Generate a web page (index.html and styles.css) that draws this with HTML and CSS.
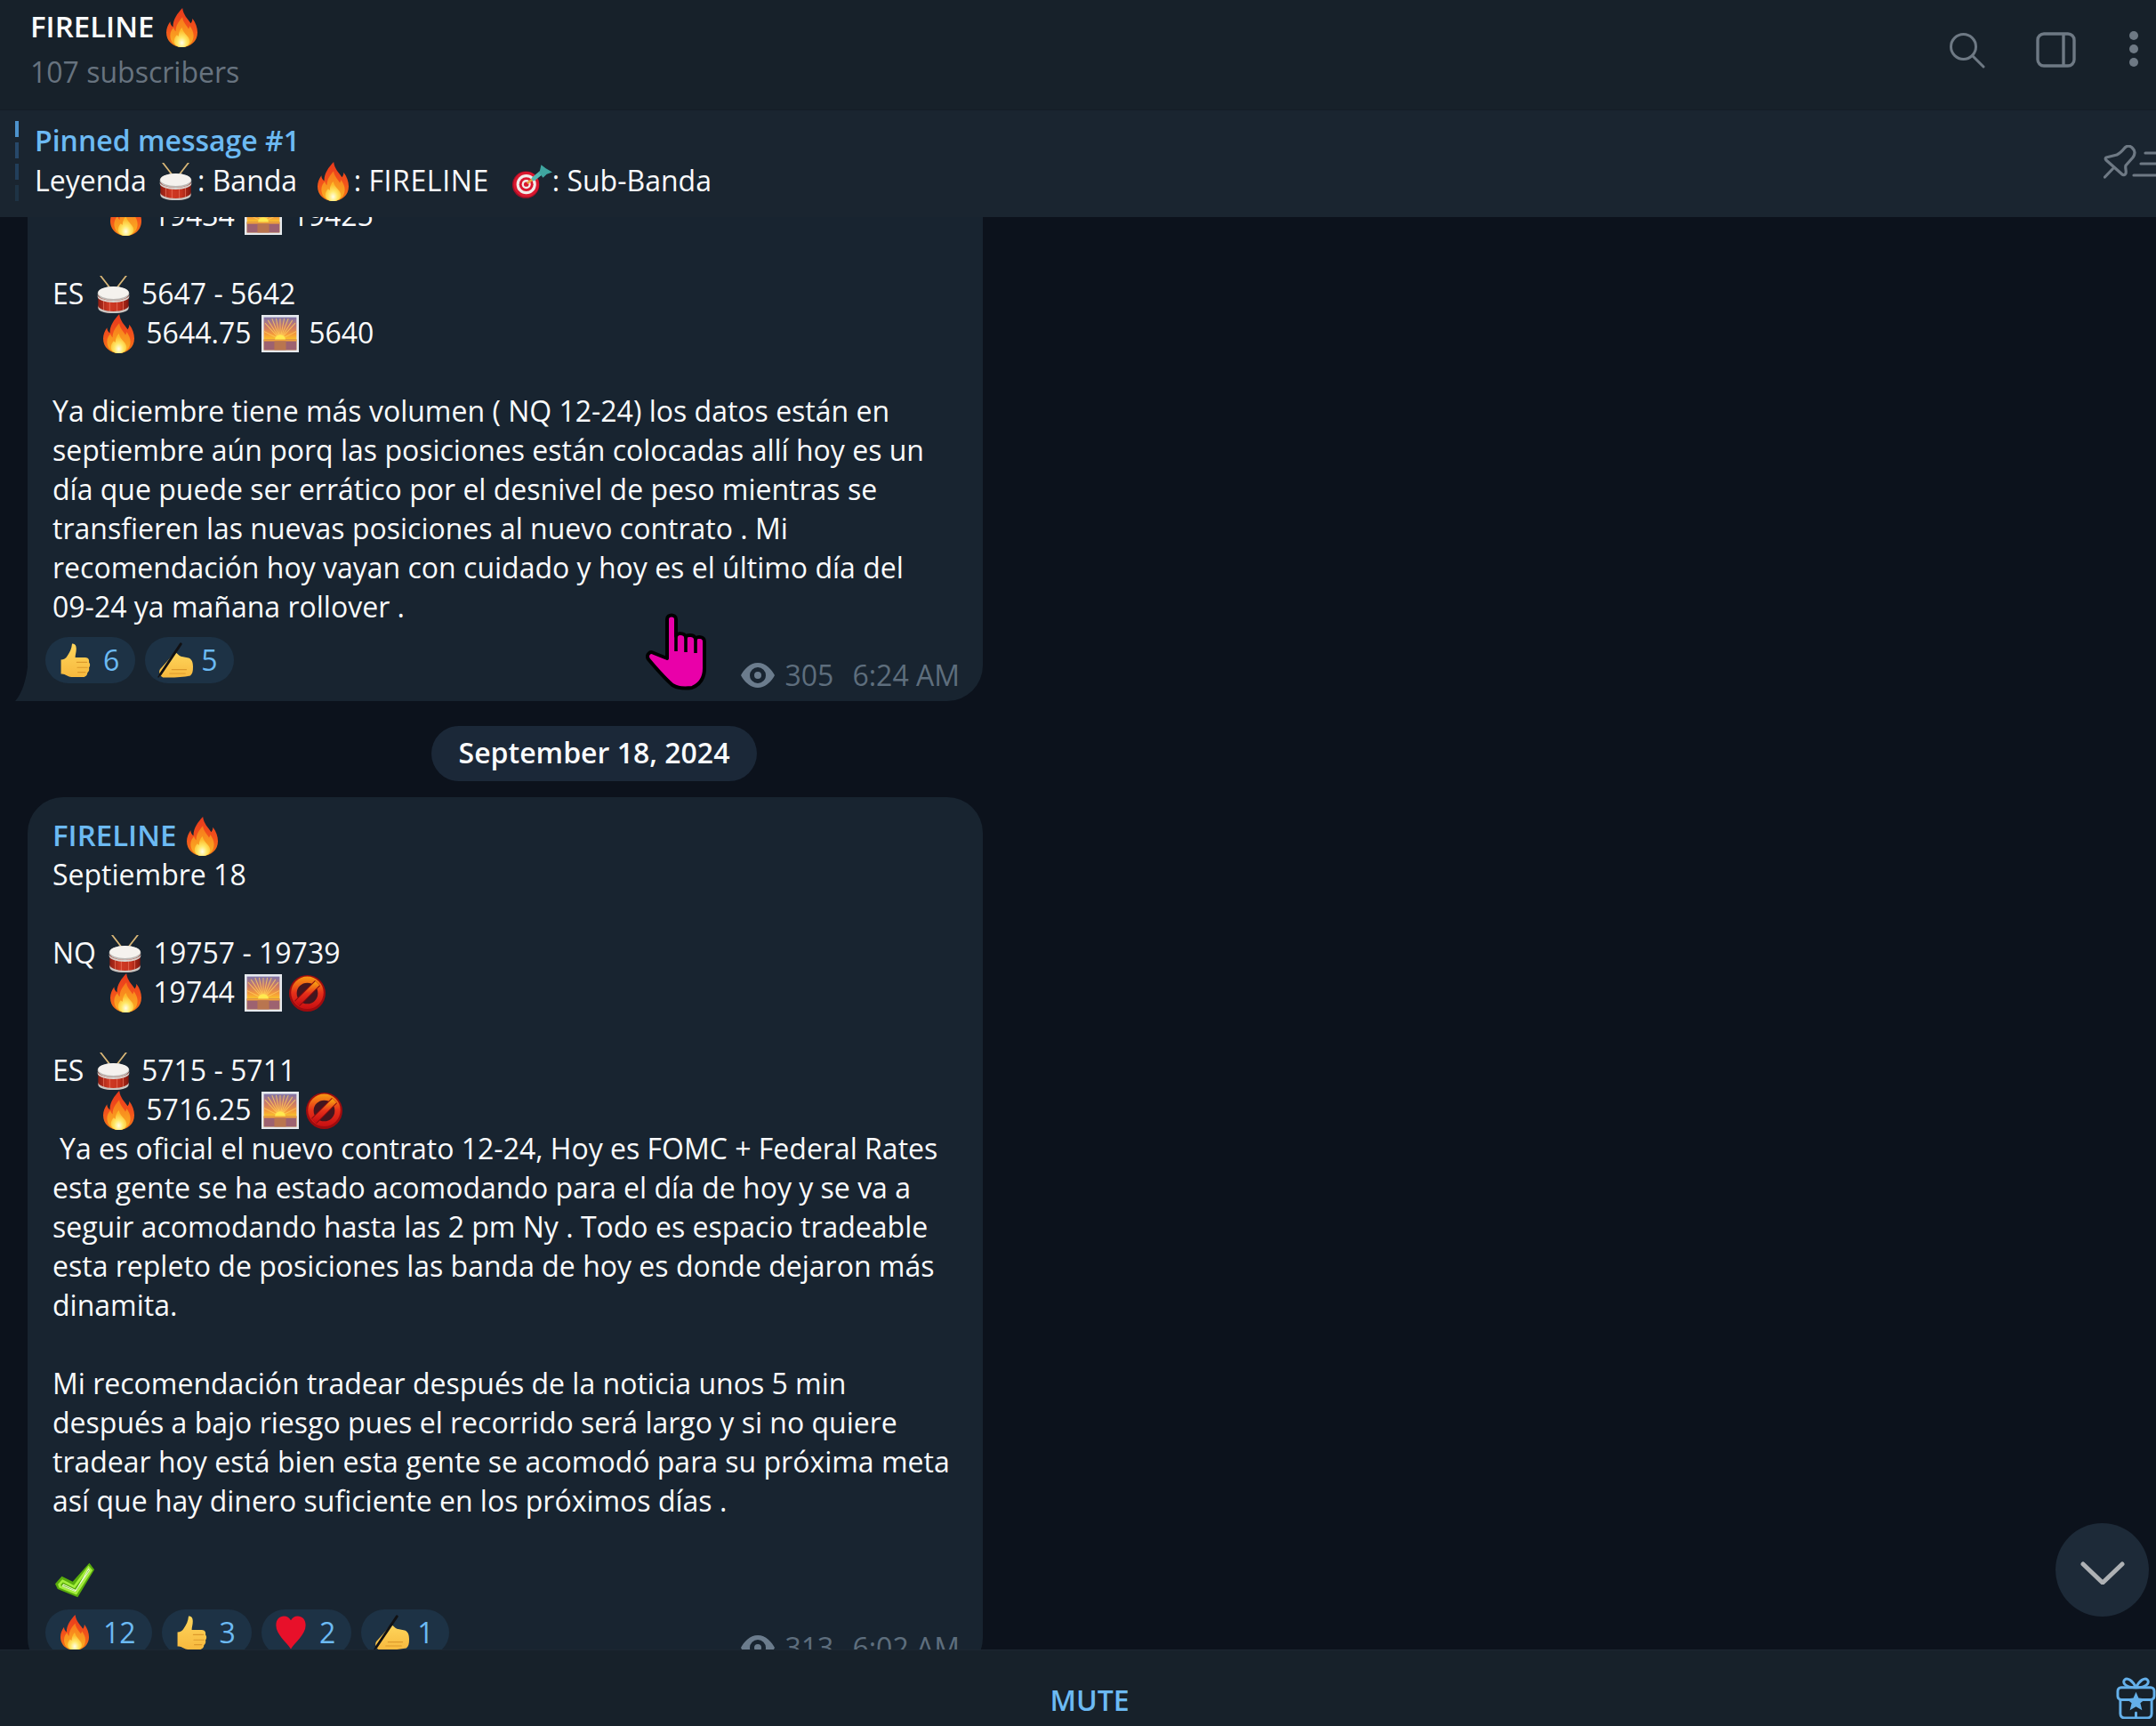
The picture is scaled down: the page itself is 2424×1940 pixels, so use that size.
FILE: index.html
```html
<!DOCTYPE html>
<html lang="es">
<head>
<meta charset="utf-8">
<title>FIRELINE</title>
<link rel="stylesheet" href="styles.css">
</head>
<body>
<svg class="sprite" xmlns="http://www.w3.org/2000/svg" aria-hidden="true">
  <defs>
    <linearGradient id="gFire" x1="0" y1="0" x2="0" y2="1"><stop offset="0" stop-color="#e8391c"/><stop offset=".55" stop-color="#f2531b"/><stop offset="1" stop-color="#f47a16"/></linearGradient>
    <linearGradient id="gFireMid" x1="0" y1="0" x2="0" y2="1"><stop offset="0" stop-color="#f7761a"/><stop offset="1" stop-color="#fbb324"/></linearGradient>
    <radialGradient id="gFireIn" cx=".5" cy=".78" r=".62"><stop offset="0" stop-color="#fffde8"/><stop offset=".45" stop-color="#ffe96a"/><stop offset="1" stop-color="#fdb92a"/></radialGradient>
    <linearGradient id="gDrum" x1="0" y1="0" x2="1" y2="0"><stop offset="0" stop-color="#8f1d12"/><stop offset=".35" stop-color="#d03a24"/><stop offset=".7" stop-color="#c5321e"/><stop offset="1" stop-color="#7f170f"/></linearGradient>
    <linearGradient id="gSky" x1="0" y1="0" x2="0" y2="1"><stop offset="0" stop-color="#7f74a8"/><stop offset=".28" stop-color="#c8776a"/><stop offset=".52" stop-color="#f59a3a"/><stop offset=".66" stop-color="#f9bf2e"/></linearGradient>
    <linearGradient id="gNo" x1="0" y1="0" x2="0" y2="1"><stop offset="0" stop-color="#f79a12"/><stop offset=".5" stop-color="#e6301a"/><stop offset="1" stop-color="#c90f12"/></linearGradient>
    <linearGradient id="gThumb" x1="0" y1="0" x2="0" y2="1"><stop offset="0" stop-color="#ffd65c"/><stop offset="1" stop-color="#f7b93e"/></linearGradient>

    <symbol id="fire" viewBox="4 0 56 64" preserveAspectRatio="none">
      <path fill="url(#gFire)" d="M33 0c2 12 9 17 15 25 2-2 3-5 3-8 6 7 9 15 9 23 0 14-12 24-28 24S4 54 4 40c0-7 3-13 7-18 0 4 2 7 5 9 0-13 8-22 17-31z"/>
      <path fill="url(#gFireMid)" d="M33 15c1 8 6 12 11 19 1-1 2-3 2-5 4 5 7 10 7 16 0 11-9 19-21 19S11 56 11 45c0-6 3-10 6-13 1 3 2 5 4 6 0-9 5-16 12-23z"/>
      <path fill="url(#gFireIn)" d="M32 32c2 6 5 9 9 13 3 3 5 6 5 9 0 6-6 10-14 10s-14-4-14-10c0-4 2-7 5-10 1 1 2 2 3 2 0-5 2-10 6-14z"/>
    </symbol>

    <symbol id="drum" viewBox="5 0 54 63" preserveAspectRatio="none">
      <path d="M11 0l19 25M53 0L34 25" stroke="#d9b777" stroke-width="2.6" stroke-linecap="round" fill="none"/>
      <path fill="url(#gDrum)" d="M7 31v22c0 6 11 10 25 10s25-4 25-10V31z"/>
      <path d="M16 38v23M26 41v22M38 41v22M48 38v23" stroke="#e9745e" stroke-width="1.1" fill="none"/>
      <path d="M7 50c0 6 11 10 25 10s25-4 25-10v4c0 6-11 9-25 9S7 60 7 54z" fill="#c9c6c2"/>
      <ellipse cx="32" cy="30" rx="26" ry="12" fill="#bdb9b5"/>
      <ellipse cx="32" cy="28.5" rx="25" ry="10.5" fill="#f5f2ee"/>
      <path d="M6 32c0 6 12 10 26 10s26-4 26-10v3c0 6-12 10-26 10S6 41 6 35z" fill="#d8d4cf"/>
    </symbol>

    <symbol id="sunrise" viewBox="0 0 64 64">
      <rect x="0" y="0" width="64" height="64" fill="#e6eaee"/>
      <rect x="4" y="4" width="56" height="56" fill="url(#gSky)"/>
      <g stroke="#ffcf5e" stroke-width="1.6" opacity=".75">
        <path d="M32 42L32 6M32 42L18 6M32 42L46 6M32 42L6 14M32 42L58 14M32 42L4 28M32 42L60 28M32 42L25 6M32 42L39 6M32 42L11 9M32 42L53 9"/>
      </g>
      <path d="M4 42h56v18H4z" fill="#9d6270"/>
      <path d="M4 42h56v3H4z" fill="#f4a436"/>
      <path d="M22 45h20v15H22z" fill="#b9754f"/>
      <path d="M23 42a9 8 0 0 1 18 0z" fill="#ffe94f"/>
    </symbol>

    <symbol id="noentry" viewBox="0 0 64 64">
      <circle cx="32" cy="32" r="32" fill="#9f0b0e"/>
      <circle cx="32" cy="31" r="28.5" fill="url(#gNo)"/>
      <circle cx="32" cy="32" r="18.5" fill="#43161f"/>
      <path d="M14 50L50 14" stroke="#8a0a0e" stroke-width="13"/>
      <path d="M14 50L50 14" stroke="url(#gNo)" stroke-width="10"/>
    </symbol>

    <symbol id="target" viewBox="0 0 43 36">
      <circle cx="14.5" cy="21.5" r="14.5" fill="#a40f26"/>
      <circle cx="15" cy="21" r="13.6" fill="#d9182f"/>
      <circle cx="15" cy="21" r="10.6" fill="#f2ecea"/>
      <circle cx="15" cy="21" r="7.6" fill="#d9182f"/>
      <circle cx="15" cy="21" r="4.8" fill="#f2ecea"/>
      <circle cx="15" cy="21" r="2.6" fill="#d9182f"/>
      <path d="M16 20l8-6" stroke="#e9a13a" stroke-width="2.4"/>
      <path d="M23 15l10-8" stroke="#52b9b2" stroke-width="4.6" stroke-linecap="round"/>
      <path d="M29 9l2-9 5 4 7 4-6 2-4 4z" fill="#3fa6a0"/>
    </symbol>

    <symbol id="thumb" viewBox="0 0 64 64">
      <path fill="url(#gThumb)" d="M27 1c5-1 8 3 8 9 0 7-2 12-2 17h19c6 0 8 5 7 9 3 3 2 8 0 10 1 4 0 8-3 10 0 4-3 8-8 8H30c-6 0-12-2-15-4-3-2-6-2-9-2V31c5 0 9-2 12-7 5-7 8-13 9-23z"/>
      <path d="M36 36h19M37 46h19M38 55h14" stroke="#dd9a2c" stroke-width="1.8" stroke-linecap="round" fill="none"/>
    </symbol>

    <symbol id="write" viewBox="0 0 64 64">
      <path fill="url(#gThumb)" d="M5 48C14 38 24 26 32 17C36 20 38 23 42 25L56 28C62 30 64 36 64 44C64 52 63 57 59 60C44 63 24 64 10 63C3 60 2 52 5 48Z"/>
      <path d="M26 49h26M22 56h28" stroke="#dd9a2c" stroke-width="1.8" stroke-linecap="round" fill="none"/>
      <path d="M42 3L5 58" stroke="#111113" stroke-width="4.6" stroke-linecap="round"/>
      <path d="M5 58l-4 5" stroke="#111113" stroke-width="2"/>
    </symbol>

    <symbol id="heart" viewBox="0 0 64 64">
      <path fill="#e8102a" d="M32 63C24 50 4 36 4 18 4 7 11 1 19 1c6 0 10 3 13 8 3-5 7-8 13-8 8 0 15 6 15 17 0 18-20 32-28 45z"/>
    </symbol>

    <symbol id="check" viewBox="0 0 48 48" preserveAspectRatio="none">
      <path fill="#58ab0c" d="M41 1l6 9-20 37-24-11-3-7 8-10 13 7z"/>
      <path fill="none" stroke="#a4ee3c" stroke-width="3" d="M40 7l3 4-18 31-19-9-1-3 4-5 14 8z"/>
      <path fill="none" stroke="#e8f9c8" stroke-width="1.2" d="M40 9l1 2-17 28-15-7 1-2 15 8z"/>
    </symbol>
  </defs>
</svg>

<div class="app">
  <header class="topbar">
    <div class="peer">
      <div class="peer-name">FIRELINE <svg class="emo emo-fire emo-title"><use href="#fire"/></svg></div>
      <div class="peer-sub">107 subscribers</div>
    </div>
    <div class="top-icons">
      <svg class="ic-search" viewBox="0 0 40 40" fill="none" stroke="#6e7984" stroke-width="3" stroke-linecap="round"><circle cx="15.5" cy="15.5" r="14"/><path d="M25.5 25.5L38 38"/></svg>
      <svg class="ic-panel" viewBox="0 0 45 40" fill="none" stroke="#6e7984" stroke-width="3.4"><rect x="2" y="2" width="41" height="36" rx="7"/><path d="M31 2v36"/></svg>
      <svg class="ic-dots" viewBox="0 0 10 40" fill="#6e7984"><circle cx="5" cy="5" r="5"/><circle cx="5" cy="20" r="5"/><circle cx="5" cy="35" r="5"/></svg>
    </div>
  </header>

  <section class="pinned">
    <div class="pin-track">
      <span class="seg seg-1"></span><span class="seg seg-2"></span><span class="seg seg-3"></span><span class="seg seg-4"></span>
    </div>
    <div class="pin-text">
      <div class="pin-title">Pinned message #1</div>
      <div class="pin-line">Leyenda <svg class="emo emo-drum"><use href="#drum"/></svg>: Banda  <svg class="emo emo-fire"><use href="#fire"/></svg>: <span class="caps">FIRELINE</span>   <svg class="emo emo-target"><use href="#target"/></svg>: Sub-Banda</div>
    </div>
    <svg class="ic-pinlist" viewBox="0 0 59 38" fill="none" stroke="#6e7984" stroke-width="3.2" stroke-linecap="round" stroke-linejoin="round">
      <path d="M1.5 36L12 25M3 14L15 11C17 10 20 8 24 3C27 0 31 1 33 4C36 7 35 11 33 14L25 23C24 26 26 29 25 32C24 34 22 34 21 33L3 17C2 16 2 15 3 14Z"/>
      <path d="M47 9h14M42 21h19M34 34h27"/>
    </svg>
  </section>

  <main class="chat">
    <div class="feed">
      <article class="bubble bubble-clipped">
        <div class="line"><span class="ind-nq"></span><svg class="emo emo-fire"><use href="#fire"/></svg> 19434 <svg class="emo emo-sun"><use href="#sunrise"/></svg> 19425</div>
        <div class="line blank"></div>
        <div class="line">ES <svg class="emo emo-drum"><use href="#drum"/></svg> 5647 - 5642</div>
        <div class="line"><span class="ind-es"></span><svg class="emo emo-fire"><use href="#fire"/></svg> 5644.75 <svg class="emo emo-sun"><use href="#sunrise"/></svg> 5640</div>
        <div class="line blank"></div>
        <p class="para">Ya diciembre tiene más volumen ( NQ 12-24) los datos están en septiembre aún porq las posiciones están colocadas allí hoy es un día que puede ser errático por el desnivel de peso mientras se transfieren las nuevas posiciones al nuevo contrato . Mi recomendación hoy vayan con cuidado y hoy es el último día del <span class="nb">09-24</span> ya mañana rollover .</p>
        <div class="foot">
          <span class="react"><svg class="emo-r"><use href="#thumb"/></svg>6</span>
          <span class="react"><svg class="emo-r r-write"><use href="#write"/></svg>5</span>
          <span class="meta"><svg class="ic-eye" viewBox="0 0 38 30"><path fill="#6b7c8d" fill-rule="evenodd" d="M19 1C10 1 3 9 0 15c3 6 10 14 19 14s16-8 19-14C35 9 28 1 19 1zm0 5a9 9 0 1 1 0 18 9 9 0 0 1 0-18zm0 5a4 4 0 1 0 0 8 4 4 0 0 0 0-8z"/></svg><span class="views">305</span><span>6:24 AM</span></span>
        </div>
        <svg class="tail" viewBox="0 0 16 50" preserveAspectRatio="none"><path fill="#182430" d="M16 0v50H0C8 42 15 24 16 0z"/></svg>
        <svg class="cursor" viewBox="0 0 68 87"><path fill="#e900a9" stroke="#000" stroke-width="4" stroke-linejoin="round" d="M24 51V7C24 1 34 1 34 7V26C35 22 44 22 45 27C46 24 55 24 56 29C57 26 66 26 66 32V62C66 72 62 80 52 84C44 85 36 85 30 81C20 72 8 58 3 52C0 47 5 42 9 45Z"/><path stroke="#000" stroke-width="3.6" d="M34 26V43M45 27V44M56 29V45"/></svg>
      </article>

      <div class="date-row"><span class="date-pill">September 18, 2024</span></div>

      <article class="bubble">
        <div class="line sender">FIRELINE <svg class="emo emo-fire"><use href="#fire"/></svg></div>
        <div class="line">Septiembre 18</div>
        <div class="line blank"></div>
        <div class="line">NQ <svg class="emo emo-drum"><use href="#drum"/></svg> 19757 - 19739</div>
        <div class="line"><span class="ind-nq"></span><svg class="emo emo-fire"><use href="#fire"/></svg> 19744 <svg class="emo emo-sun"><use href="#sunrise"/></svg><svg class="emo emo-no"><use href="#noentry"/></svg></div>
        <div class="line blank"></div>
        <div class="line">ES <svg class="emo emo-drum"><use href="#drum"/></svg> 5715 - 5711</div>
        <div class="line"><span class="ind-es"></span><svg class="emo emo-fire"><use href="#fire"/></svg> 5716.25 <svg class="emo emo-sun"><use href="#sunrise"/></svg><svg class="emo emo-no"><use href="#noentry"/></svg></div>
        <p class="para"><span class="ind-sp"></span>Ya es oficial el nuevo contrato 12-24, Hoy es FOMC + Federal Rates esta gente se ha estado acomodando para el día de hoy y se va a seguir acomodando hasta las 2 pm Ny . Todo es espacio tradeable esta repleto de posiciones las banda de hoy es donde dejaron más dinamita.</p>
        <div class="line blank"></div>
        <p class="para">Mi recomendación tradear después de la noticia unos 5 min después a bajo riesgo pues el recorrido será largo y si no quiere tradear hoy está bien esta gente se acomodó para su próxima meta así que hay dinero suficiente en los próximos días .</p>
        <div class="line blank"></div>
        <div class="line"><svg class="emo emo-check"><use href="#check"/></svg></div>
        <div class="foot">
          <span class="react"><svg class="emo-r r-fire"><use href="#fire"/></svg>12</span>
          <span class="react"><svg class="emo-r"><use href="#thumb"/></svg>3</span>
          <span class="react"><svg class="emo-r"><use href="#heart"/></svg>2</span>
          <span class="react"><svg class="emo-r r-write"><use href="#write"/></svg>1</span>
          <span class="meta"><svg class="ic-eye" viewBox="0 0 38 30"><path fill="#6b7c8d" fill-rule="evenodd" d="M19 1C10 1 3 9 0 15c3 6 10 14 19 14s16-8 19-14C35 9 28 1 19 1zm0 5a9 9 0 1 1 0 18 9 9 0 0 1 0-18zm0 5a4 4 0 1 0 0 8 4 4 0 0 0 0-8z"/></svg><span class="views">313</span><span>6:02 AM</span></span>
        </div>
      </article>
    </div>
    <button class="scroll-down" type="button" aria-label="Scroll down">
      <svg viewBox="0 0 50 26" fill="none" stroke="#aeb1b4" stroke-width="5" stroke-linecap="round" stroke-linejoin="round"><path d="M3 3l22 21L47 3"/></svg>
    </button>
  </main>

  <footer class="bottom">
    <div class="mute">MUTE</div>
    <svg class="ic-gift" viewBox="0 0 46 48" fill="none" stroke="#64b0ea" stroke-width="3" stroke-linecap="round" stroke-linejoin="round">
      <path d="M23 12C19 4 13 0 10 3c-3 3 0 9 13 9zM23 12C27 4 33 0 36 3c3 3 0 9-13 9z"/>
      <rect x="2" y="12" width="42" height="14" rx="4"/>
      <path d="M5 26v16c0 3 2 5 5 5h26c3 0 5-2 5-5V26M23 41v6"/>
      <path fill="#64b0ea" stroke="none" d="M23 17l3 7 8 1-6 5 2 8-7-4-7 4 2-8-6-5 8-1z"/>
    </svg>
  </footer>
</div>
</body>
</html>
```

FILE: styles.css
```css
* { box-sizing: border-box; }
html, body { margin: 0; padding: 0; height: 100%; }
body {
  background: #0c121c;
  color: #fafbfc;
  font-family: "Open Sans", "Noto Sans", sans-serif;
  font-size: 32px;
  line-height: 44px;
  overflow: hidden;
}
.sprite { position: absolute; width: 0; height: 0; }
.app { display: flex; flex-direction: column; width: 2424px; height: 1940px; overflow: hidden; }

.topbar {
  flex: 0 0 124px;
  display: flex;
  justify-content: space-between;
  background: #17212a;
  border-bottom: 1px solid #141d26;
  padding: 8px 20px 0 34px;
  position: relative;
  z-index: 3;
}
.peer-name { font-weight: 600; font-size: 33px; height: 44px; white-space: pre; }
.peer-sub { color: #67737f; margin-top: 7px; }
.emo { display: inline-block; vertical-align: middle; position: relative; top: -2px; margin-block: -8px; }
.top-icons { display: flex; align-items: flex-start; }
.ic-search { width: 40px; height: 40px; margin-top: 29px; margin-right: 57px; }
.ic-panel { width: 45px; height: 40px; margin-top: 28px; margin-right: 60px; }
.ic-dots { width: 10px; height: 40px; margin-top: 27px; }

.pinned {
  flex: 0 0 120px;
  display: flex;
  background: #1a2530;
  padding: 12px 0 0 17px;
  position: relative;
  z-index: 3;
}
.pin-track { display: flex; flex-direction: column; gap: 6px; width: 4px; margin-right: 18px; flex: none; }
.seg { display: block; height: 18px; flex: none; width: 4px; }
.seg-1 { background: #4d93cd; }
.seg-2 { background: #27496a; }
.seg-3 { background: #223f5b; }
.seg-4 { background: #1e3345; }
.pin-text { flex: 1; }
.pin-title { color: #6cbaf3; font-weight: 600; }
.pin-line { margin-top: 1px; white-space: pre; }
.pin-line .emo-fire { margin-left: 6px; margin-right: 6px; }
.pin-line .emo-drum { margin-left: 6px; margin-right: 6px; }
.caps { letter-spacing: 0.6px; }
.ic-pinlist { width: 59px; height: 38px; margin-top: 27px; flex: none; }

.chat { flex: 1; min-height: 0; position: relative; overflow: hidden; }
.feed { margin-top: -24px; padding-left: 31px; width: 1336px; }
.bubble {
  width: 1074px;
  background: #182430;
  border-radius: 40px;
  padding: 21px 27px 20px 28px;
  position: relative;
}
.bubble-clipped { border-radius: 0 0 40px 0; padding-top: 0; }
.line { min-height: 44px; height: 44px; white-space: pre; }
.para { margin: 0; }
.nb { white-space: nowrap; }
.sender { color: #6cbaf3; font-weight: 600; font-size: 33px; }
.ind-nq { display: inline-block; width: 62px; }
.ind-es { display: inline-block; width: 54px; }
.ind-sp { display: inline-block; width: 8px; }
.emo-fire { width: 35px; height: 44px; margin-inline: 3px 5px; }
.emo-drum { width: 37px; height: 42px; margin-inline: 6px 5px; }
.emo-sun { width: 42px; height: 42px; margin-inline: 3px; }
.emo-no { width: 41px; height: 41px; margin-left: 5px; }
.emo-target { width: 45px; height: 38px; margin-left: 1px; }
.emo-check { width: 45px; height: 40px; margin-left: 3px; }
.emo-title { margin-left: 5px; }

.foot { display: flex; align-items: flex-start; gap: 11px; margin: 12px 0 0 -8px; height: 52px; position: relative; }
.react {
  display: flex;
  align-items: center;
  gap: 13px;
  height: 52px;
  padding: 0 18px 0 14px;
  border-radius: 26px;
  background: #1d3245;
  color: #6cbaf3;
}
.emo-r { width: 38px; height: 40px; flex: none; }
.r-fire { width: 32px; margin: 0 3px; }
.r-write { width: 40px; margin-right: -4px; }
.meta {
  margin-left: auto;
  display: flex;
  align-items: center;
  color: #5e6e7d;
  font-size: 32px;
  margin-top: 21px;
  margin-right: -1px;
}
.ic-eye { width: 38px; height: 30px; margin-right: 11px; }
.views { margin-right: 21px; }
.tail { position: absolute; left: -14px; bottom: 0; width: 15px; height: 50px; }
.cursor { position: absolute; left: 695px; bottom: 12px; width: 68px; height: 87px; }

.date-row { display: flex; justify-content: center; padding: 28px 31px 18px 0; }
.date-pill {
  display: block;
  height: 62px;
  line-height: 60px;
  padding: 0 31px;
  border-radius: 31px;
  background: #1b2838;
  font-weight: 600;
}

.scroll-down {
  position: absolute;
  right: 8px;
  bottom: 37px;
  width: 105px;
  height: 105px;
  border: 0;
  padding: 0;
  border-radius: 50%;
  background: #1d2a38;
  display: flex;
  align-items: center;
  justify-content: center;
}
.scroll-down svg { width: 50px; height: 26px; margin-top: 6px; }

.bottom {
  flex: 0 0 86px;
  display: flex;
  align-items: flex-start;
  background: #17212a;
  border-top: 1px solid #1d2731;
  position: relative;
  z-index: 3;
}
.mute {
  flex: 1;
  padding-left: 71px;
  text-align: center;
  color: #6cbaf3;
  font-weight: 600;
  margin-top: 34px;
}
.ic-gift { width: 45px; height: 47px; margin-top: 30px; flex: none; }
```
